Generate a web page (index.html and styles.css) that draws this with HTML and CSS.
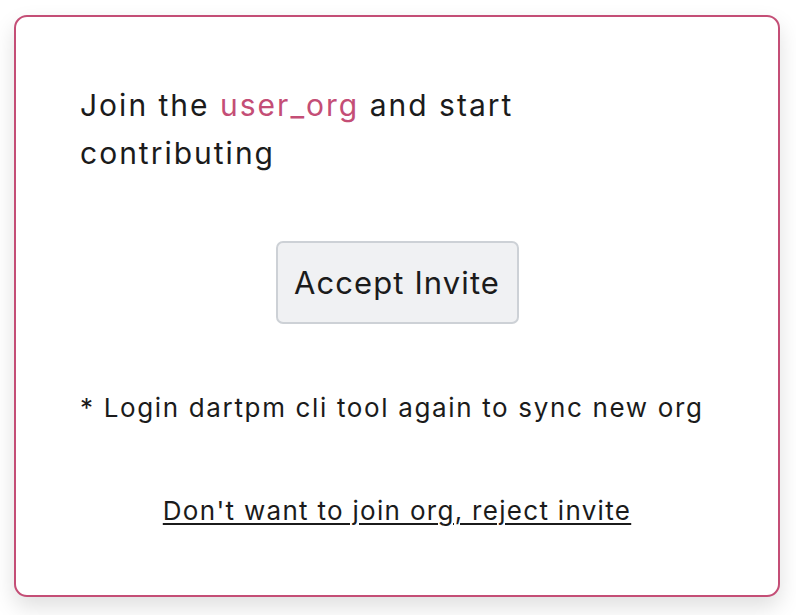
FILE: index.html
```html
<!DOCTYPE html>
<html lang="en">
<head>
<meta charset="utf-8">
<title>Join organisation</title>
<link rel="stylesheet" href="styles.css">
</head>
<body>
<main class="page">
  <section class="card">
    <h1 class="title">Join the <span class="org">user_org</span> and start contributing</h1>
    <button class="accept" type="button">Accept Invite</button>
    <p class="note">* Login dartpm cli tool again to sync new org</p>
    <a class="reject" href="#">Don't want to join org, reject invite</a>
  </section>
</main>
</body>
</html>
```

FILE: styles.css
```css
html, body {
  margin: 0;
  padding: 0;
  background: #ffffff;
}

body {
  font-family: Inter, "Noto Sans", sans-serif;
  color: #1b1b1b;
}

.page {
  padding: 15px 16px 18px 14px;
}

.card {
  box-sizing: border-box;
  height: 582px;
  border: 2px solid #c44e76;
  border-radius: 13px;
  background: #ffffff;
  box-shadow: 0 10px 22px rgba(0, 0, 0, 0.13);
  padding: 64px 64px;
  display: flex;
  flex-direction: column;
  align-items: center;
  gap: 64px;
}

.title {
  align-self: stretch;
  margin: 0;
  max-width: 500px;
  font-size: 30px;
  font-weight: 400;
  line-height: 48px;
  letter-spacing: 2px;
}

.org {
  color: #c44e76;
}

.accept {
  font-family: inherit;
  font-size: 31px;
  letter-spacing: 1.1px;
  color: #1b1b1b;
  background: #f0f1f3;
  border: 2px solid #cdd1d6;
  border-radius: 7px;
  padding: 0 16px;
  height: 83px;
  min-width: 243px;
  cursor: pointer;
}

.note {
  align-self: stretch;
  margin: 0;
  font-size: 26px;
  line-height: 39px;
  letter-spacing: 1.65px;
}

.reject {
  font-size: 26px;
  line-height: 39px;
  letter-spacing: 1.3px;
  color: #1b1b1b;
  text-decoration: underline;
  text-decoration-thickness: 2px;
  text-underline-offset: 3px;
}
```
